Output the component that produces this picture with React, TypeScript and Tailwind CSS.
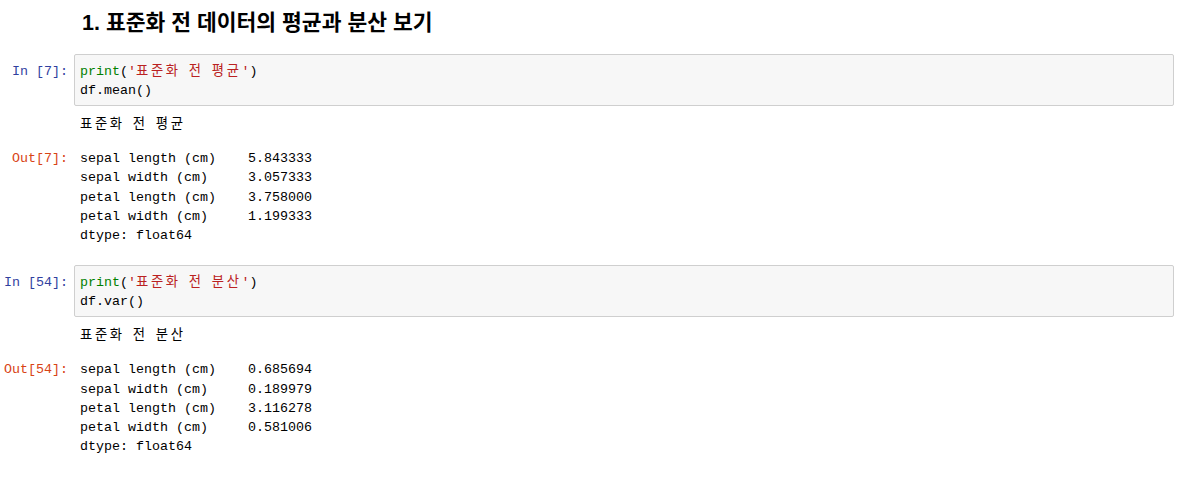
import React from "react";

const mono = "font-['Liberation_Mono','Noto_Sans_CJK_KR',monospace] text-[13.333px]";

function K({ t }: { t: string }) {
  const parts = t.split(/([\uAC00-\uD7A3]+)/);
  return (
    <>
      {parts.map((p, i) =>
        /[\uAC00-\uD7A3]/.test(p) ? (
          <span key={i} className="tracking-[2.67px]">
            {p}
          </span>
        ) : (
          <span key={i}>{p}</span>
        )
      )}
    </>
  );
}

function Cell({
  n,
  label,
  method,
  stream,
  lines,
}: {
  n: string;
  label: string;
  method: string;
  stream: string;
  lines: string[];
}) {
  return (
    <div className="flex flex-col">
      <div className="flex pr-[14px]">
        <div className={`${mono} w-[74px] shrink-0 text-right pr-[6px] pt-[8px] leading-[19px] text-[#303F9F] whitespace-pre`}>
          {`In [${n}]:`}
        </div>
        <div className="flex-1 border border-[#cfcfcf] rounded-[2px] bg-[#f7f7f7] pl-[5px] pt-[7px] pb-[5px]">
          <div className={`${mono} leading-[19px] text-black whitespace-pre`}>
            <span className="text-[#008000]">print</span>(
            <span className="text-[#BA2121]">
              '<K t={`표준화 전 ${label}`} />'
            </span>
            )
          </div>
          <div className={`${mono} leading-[19px] text-black whitespace-pre`}>{`df.${method}()`}</div>
        </div>
      </div>
      <div className={`${mono} pl-[80px] mt-[9px] leading-[19px] text-black whitespace-pre`}>
        <K t={stream} />
      </div>
      <div className="flex mt-[15px]">
        <div className={`${mono} w-[74px] shrink-0 text-right pr-[6px] leading-[19.25px] text-[#D84315] whitespace-pre`}>
          {`Out[${n}]:`}
        </div>
        <div className={`${mono} pl-[6px] leading-[19.25px] text-black whitespace-pre`}>
          {lines.map((l, i) => (
            <div key={i}>{l}</div>
          ))}
        </div>
      </div>
    </div>
  );
}

export default function App() {
  return (
    <div className="w-[1188px] h-[483px] bg-white overflow-hidden">
      <div className="pl-[82px] pt-[10px] text-[21.5px] leading-[26px] font-bold text-black font-['Liberation_Sans','Noto_Sans_CJK_KR',sans-serif]">
        1. 표준화 전 데이터의 평균과 분산 보기
      </div>
      <div className="mt-[18px]">
        <Cell
          n="7"
          label="평균"
          method="mean"
          stream="표준화 전 평균"
          lines={[
            "sepal length (cm)    5.843333",
            "sepal width (cm)     3.057333",
            "petal length (cm)    3.758000",
            "petal width (cm)     1.199333",
            "dtype: float64",
          ]}
        />
      </div>
      <div className="mt-[20px]">
        <Cell
          n="54"
          label="분산"
          method="var"
          stream="표준화 전 분산"
          lines={[
            "sepal length (cm)    0.685694",
            "sepal width (cm)     0.189979",
            "petal length (cm)    3.116278",
            "petal width (cm)     0.581006",
            "dtype: float64",
          ]}
        />
      </div>
    </div>
  );
}
